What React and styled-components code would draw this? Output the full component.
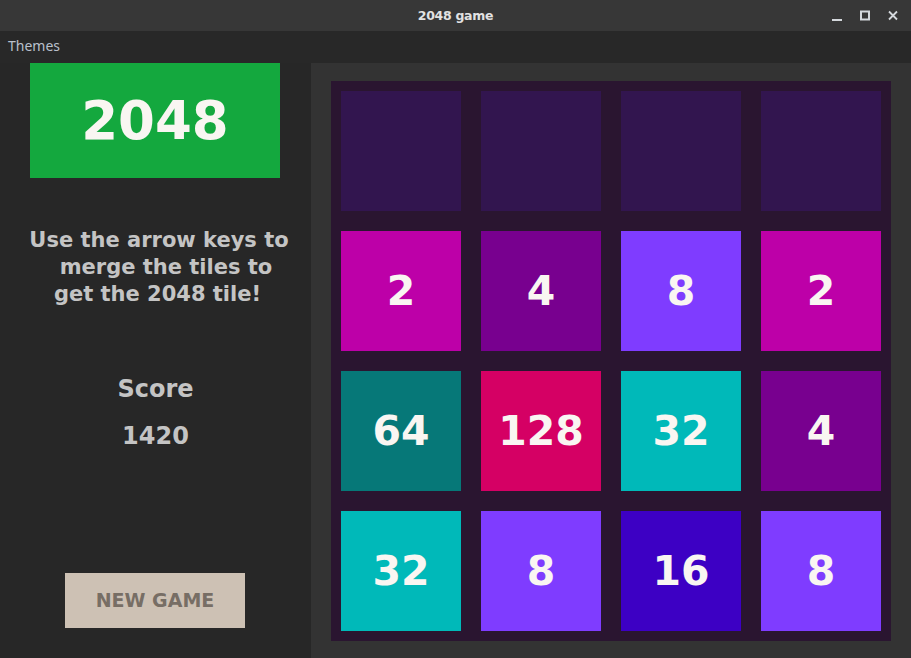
import React from "react";
import styled, { createGlobalStyle } from "styled-components";

const Global = createGlobalStyle`
  html, body { margin: 0; padding: 0; background: #272727; }
  #root { width: 911px; height: 658px; overflow: hidden; }
  * { box-sizing: border-box; }
`;

const Window = styled.div`
  width: 911px;
  height: 658px;
  display: flex;
  flex-direction: column;
  background: #272727;
  font-family: "DejaVu Sans", sans-serif;
`;

const TitleBar = styled.div`
  height: 31px;
  flex: none;
  background: #373737;
  position: relative;
  display: flex;
  align-items: center;
  justify-content: center;
`;

const Title = styled.span`
  font-family: "DejaVu Sans", sans-serif;
  font-weight: bold;
  font-size: 12.5px;
  color: #e2e2e2;
  letter-spacing: -0.3px;
`;

const Controls = styled.div`
  position: absolute;
  right: 12px;
  top: 0;
  height: 31px;
  display: flex;
  align-items: center;
  gap: 16px;
`;

const MenuBar = styled.div`
  height: 32px;
  flex: none;
  background: #282828;
  display: flex;
  align-items: center;
  padding-left: 8px;
  padding-bottom: 3px;
`;

const MenuItem = styled.span`
  font-family: "Noto Sans", sans-serif;
  font-size: 14px;
  color: #b9c0cc;
`;

const Main = styled.div`
  flex: 1;
  display: flex;
`;

const LeftPanel = styled.div`
  width: 311px;
  flex: none;
  background: #272727;
  display: flex;
  flex-direction: column;
  align-items: center;
  color: #c4c4c4;
  font-weight: bold;
`;

const Logo = styled.div`
  width: 250px;
  height: 115px;
  background: #14a83e;
  color: #f9f6f2;
  font-size: 53px;
  font-weight: bold;
  display: flex;
  align-items: center;
  justify-content: center;
  margin-left: -1px;
`;

const Instructions = styled.div`
  margin-top: 49px;
  display: flex;
  flex-direction: column;
  align-items: center;
  font-size: 21px;
  line-height: 27px;
`;

const Line = styled.div`
  white-space: nowrap;
  margin-left: ${(p) => p.$shift || 0}px;
`;

const ScoreLabel = styled.div`
  margin-top: 67px;
  font-size: 24px;
  line-height: 28px;
`;

const ScoreValue = styled.div`
  margin-top: 19px;
  font-size: 24px;
  line-height: 28px;
`;

const NewGame = styled.button`
  margin-top: 123px;
  width: 180px;
  height: 55px;
  border: none;
  background: #cdc1b4;
  color: #776e65;
  font-family: "DejaVu Sans", sans-serif;
  font-weight: bold;
  font-size: 19px;
  padding: 0 0 2px 0;
  margin-left: -1px;
  display: flex;
  align-items: center;
  justify-content: center;
`;

const RightPanel = styled.div`
  flex: 1;
  background: #333333;
  padding: 18px 20px;
`;

const Board = styled.div`
  width: 560px;
  height: 560px;
  background: #2a1530;
  padding: 10px;
  display: grid;
  grid-template-columns: repeat(4, 120px);
  grid-template-rows: repeat(4, 120px);
  gap: 20px;
`;

const TILE_COLORS = {
  0: "#32154f",
  2: "#bd00a8",
  4: "#78008f",
  8: "#7f3cff",
  16: "#3d00c4",
  32: "#00b9b9",
  64: "#067878",
  128: "#d50064",
};

const Tile = styled.div`
  background: ${(p) => TILE_COLORS[p.$value] || "#32154f"};
  color: #f9f6f2;
  font-size: 41px;
  font-weight: bold;
  display: flex;
  align-items: center;
  justify-content: center;
`;

const board = [
  [0, 0, 0, 0],
  [2, 4, 8, 2],
  [64, 128, 32, 4],
  [32, 8, 16, 8],
];

export default function App() {
  return (
    <>
      <Global />
      <Window>
        <TitleBar>
          <Title>2048 game</Title>
          <Controls>
            <svg width="12" height="12" viewBox="0 0 12 12">
              <rect x="1" y="9" width="10" height="2" fill="#d4d8dc" />
            </svg>
            <svg width="12" height="12" viewBox="0 0 12 12">
              <rect x="2" y="1.5" width="8" height="8" fill="none" stroke="#d4d8dc" strokeWidth="2" />
            </svg>
            <svg width="12" height="12" viewBox="0 0 12 12">
              <path d="M2 1.5 L10 9.5 M10 1.5 L2 9.5" stroke="#d4d8dc" strokeWidth="1.8" />
            </svg>
          </Controls>
        </TitleBar>
        <MenuBar>
          <MenuItem>Themes</MenuItem>
        </MenuBar>
        <Main>
          <LeftPanel>
            <Logo>2048</Logo>
            <Instructions>
              <Line $shift={7}>Use the arrow keys to</Line>
              <Line $shift={21}>merge the tiles to</Line>
              <Line $shift={4}>get the 2048 tile!</Line>
            </Instructions>
            <ScoreLabel>Score</ScoreLabel>
            <ScoreValue>1420</ScoreValue>
            <NewGame>NEW GAME</NewGame>
          </LeftPanel>
          <RightPanel>
            <Board>
              {board.flat().map((v, i) => (
                <Tile key={i} $value={v}>
                  {v ? v : ""}
                </Tile>
              ))}
            </Board>
          </RightPanel>
        </Main>
      </Window>
    </>
  );
}
